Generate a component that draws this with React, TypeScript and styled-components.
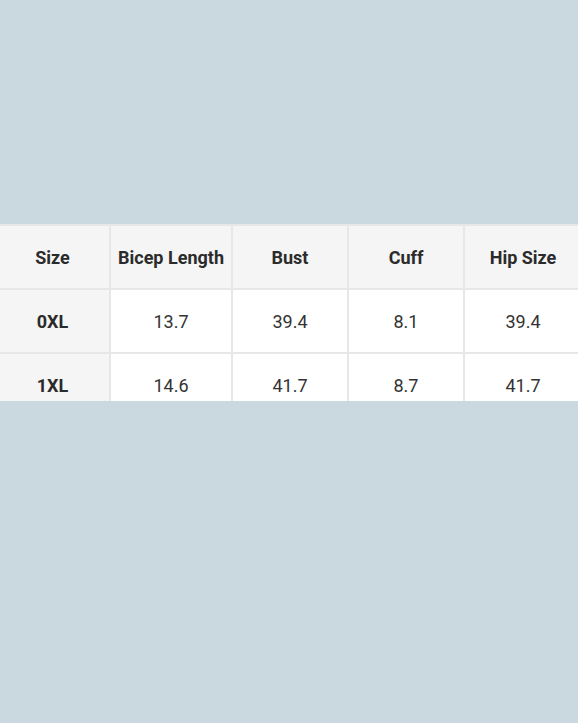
import styled, { createGlobalStyle } from 'styled-components';

const GlobalStyle = createGlobalStyle`
  html, body {
    margin: 0;
    padding: 0;
    background: #cad9df;
  }
  body {
    font-family: Roboto, "Liberation Sans", sans-serif;
  }
`;

const headers = ['Size', 'Bicep Length', 'Bust', 'Cuff', 'Hip Size'];
const widths = [115, 122, 116, 116, 118];

const rows = [
  ['0XL', '13.7', '39.4', '8.1', '39.4'],
  ['1XL', '14.6', '41.7', '8.7', '41.7'],
];

const App = () => {
  return (
    <>
      <GlobalStyle />
      <Page>
        <Scroller>
          <Table>
            <colgroup>
              {widths.map((w, i) => (
                <col key={i} style={{ width: w }} />
              ))}
            </colgroup>
            <thead>
              <tr>
                {headers.map((h) => (
                  <Th key={h}>{h}</Th>
                ))}
              </tr>
            </thead>
            <tbody>
              {rows.map((r) => (
                <tr key={r[0]}>
                  {r.map((v, i) =>
                    i === 0 ? <RowHead key={i}>{v}</RowHead> : <Td key={i}>{v}</Td>
                  )}
                </tr>
              ))}
            </tbody>
          </Table>
        </Scroller>
      </Page>
    </>
  );
};

export default App;

const Page = styled.div`
  height: 723px;
  padding-top: 224px;
  box-sizing: border-box;
  overflow: hidden;
`;

const Scroller = styled.div`
  height: 177px;
  overflow: hidden;
  background: #fff;
`;

const Table = styled.table`
  border-collapse: collapse;
  table-layout: fixed;
  margin-left: -6px;
  width: 589px;
`;

const Cell = styled.td`
  height: 62px;
  padding: 0;
  border: 2px solid #e7e7e7;
  text-align: center;
  vertical-align: middle;
  font-size: 18px;
  color: #333;
`;

const Th = styled(Cell).attrs({ as: 'th' })`
  background: #f5f5f5;
  font-weight: 700;
  color: #2b2b2b;
`;

const RowHead = styled(Cell)`
  background: #f5f5f5;
  font-weight: 700;
  color: #2b2b2b;
`;

const Td = styled(Cell)`
  background: #fff;
`;
